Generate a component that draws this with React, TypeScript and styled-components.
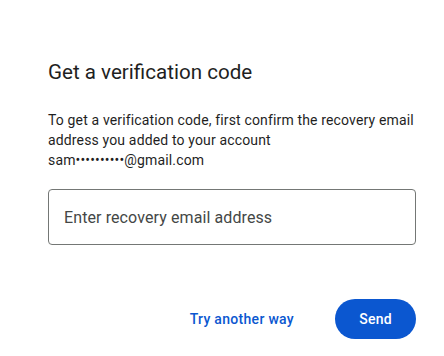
import React from "react";
import styled, { createGlobalStyle } from "styled-components";

const Global = createGlobalStyle`
  html, body { margin: 0; padding: 0; background: #ffffff; }
  body { font-family: Roboto, "Noto Sans", Arial, sans-serif; color: #1f1f1f; }
`;

const Page = styled.div`
  width: 444px;
  height: 356px;
  box-sizing: border-box;
  padding: 58px 28px 0 48px;
  display: flex;
  flex-direction: column;
`;

const Title = styled.h1`
  margin: 0;
  font-family: Roboto, Arial, sans-serif;
  font-size: 20.6px;
  font-weight: 400;
  line-height: 28px;
  color: #1f1f1f;
`;

const Body = styled.p`
  margin: 24px 0 0;
  font-size: 14px;
  line-height: 20px;
  letter-spacing: 0.15px;
  color: #1f1f1f;
`;

const Field = styled.div`
  margin-top: 19px;
  height: 56px;
  box-sizing: border-box;
  border: 1px solid #747775;
  border-radius: 4px;
  display: flex;
  align-items: center;
  padding: 0 15px;
`;

const Placeholder = styled.span`
  font-size: 16px;
  letter-spacing: 0.1px;
  color: #444746;
`;

const Actions = styled.div`
  margin-top: 54px;
  display: flex;
  justify-content: flex-end;
  align-items: center;
  gap: 29px;
`;

const TextButton = styled.button`
  border: none;
  background: none;
  padding: 0 12px;
  height: 40px;
  font-family: Roboto, Arial, sans-serif;
  font-size: 14px;
  font-weight: 500;
  letter-spacing: 0.3px;
  color: #0b57d0;
  cursor: pointer;
`;

const FilledButton = styled.button`
  border: none;
  background: #0b57d0;
  color: #ffffff;
  height: 40px;
  width: 81px;
  border-radius: 20px;
  font-family: Roboto, Arial, sans-serif;
  font-size: 14px;
  font-weight: 500;
  letter-spacing: 0.2px;
  cursor: pointer;
`;

export default function App() {
  return (
    <>
      <Global />
      <Page>
        <Title>Get a verification code</Title>
        <Body>
          To get a verification code, first confirm the recovery email address you added to your account sam••••••••••@gmail.com
        </Body>
        <Field>
          <Placeholder>Enter recovery email address</Placeholder>
        </Field>
        <Actions>
          <TextButton>Try another way</TextButton>
          <FilledButton>Send</FilledButton>
        </Actions>
      </Page>
    </>
  );
}
